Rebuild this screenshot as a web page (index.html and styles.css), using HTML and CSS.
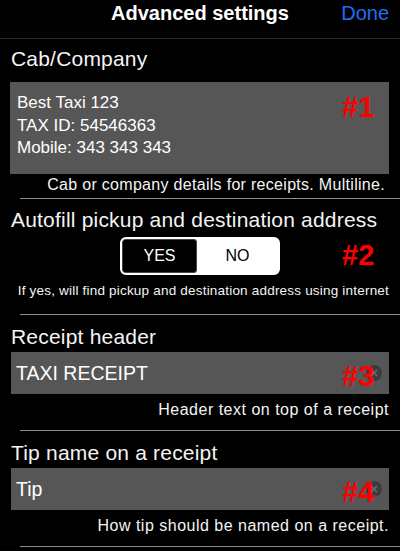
FILE: index.html
```html
<!DOCTYPE html>
<html lang="en">
<head>
    <meta charset="UTF-8">
    <meta name="viewport" content="width=device-width, initial-scale=1.0">
    <title>Advanced settings</title>
    <link rel="stylesheet" href="styles.css">
</head>
<body>
    <header class="navbar">
        <span></span>
        <h1 class="nav-title">Advanced settings</h1>
        <a class="nav-done" href="#">Done</a>
    </header>

    <section class="group group-multi">
        <h2 class="label">Cab/Company</h2>
        <div class="field field-multi">
            <div>Best Taxi 123</div>
            <div>TAX ID: 54546363</div>
            <div>Mobile: 343 343 343</div>
            <span class="badge">#1</span>
        </div>
        <p class="hint">Cab or company details for receipts. Multiline.</p>
    </section>
    <div class="separator"></div>

    <section class="group group-switch">
        <h2 class="label">Autofill pickup and destination address</h2>
        <div class="segment-row">
            <div class="segment">
                <button class="seg seg-on">YES</button>
                <button class="seg">NO</button>
            </div>
            <span class="badge badge-row">#2</span>
        </div>
        <p class="hint hint-small">If yes, will find pickup and destination address using internet</p>
    </section>
    <div class="separator"></div>

    <section class="group">
        <h2 class="label">Receipt header</h2>
        <div class="field">
            <span>TAXI RECEIPT</span>
            <svg class="clear" width="16" height="16" viewBox="0 0 16 16">
                <circle cx="8" cy="8" r="8" fill="#3c3c3c"/>
                <path d="M5 5 L11 11 M11 5 L5 11" stroke="#6c6c6c" stroke-width="1.5"/>
            </svg>
            <span class="badge">#3</span>
        </div>
        <p class="hint">Header text on top of a receipt</p>
    </section>
    <div class="separator"></div>

    <section class="group">
        <h2 class="label">Tip name on a receipt</h2>
        <div class="field">
            <span>Tip</span>
            <svg class="clear" width="16" height="16" viewBox="0 0 16 16">
                <circle cx="8" cy="8" r="8" fill="#3c3c3c"/>
                <path d="M5 5 L11 11 M11 5 L5 11" stroke="#6c6c6c" stroke-width="1.5"/>
            </svg>
            <span class="badge">#4</span>
        </div>
        <p class="hint">How tip should be named on a receipt.</p>
    </section>
    <div class="separator"></div>
</body>
</html>
```

FILE: styles.css
```css
body {
    margin: 0;
    background: #000;
    color: #f4f4f4;
    font-family: "Liberation Sans", Arial, sans-serif;
    overflow: hidden;
}
.navbar {
    display: grid;
    grid-template-columns: 1fr auto 1fr;
    align-items: start;
    height: 39px;
    padding: 1px 11px 0;
    box-sizing: border-box;
    border-bottom: 1px solid #2a2a2a;
}
.nav-title {
    margin: 0;
    font-size: 20px;
    line-height: 24px;
    font-weight: bold;
    color: #fff;
}
.nav-done {
    justify-self: end;
    font-size: 20px;
    line-height: 24px;
    color: #1f6ff4;
    text-decoration: none;
}
.group {
    padding: 10px 11px 0 11px;
}
.label {
    margin: 0;
    font-size: 21px;
    line-height: 24px;
    font-weight: normal;
    letter-spacing: 0.2px;
}
.field {
    position: relative;
    display: flex;
    align-items: center;
    height: 42px;
    margin-top: 3px;
    padding-left: 5px;
    background: #565656;
    font-size: 19.5px;
    color: #fff;
}
.field-multi {
    display: block;
    height: 92px;
    box-sizing: border-box;
    margin: 11px 0 0 -1px;
    padding: 10px 7px;
    font-size: 17px;
    line-height: 22.5px;
}
.hint {
    margin: 7px 0 11px;
    text-align: right;
    font-size: 16px;
    line-height: 18px;
    letter-spacing: 0.5px;
}
.group-multi {
    padding-top: 8px;
}
.group-multi .hint {
    margin: 2px 4px 4px 0;
    letter-spacing: 0.3px;
}
.group-switch {
    padding-top: 9px;
}
.segment-row {
    position: relative;
    display: flex;
    justify-content: center;
    margin-top: 5px;
}
.segment {
    display: flex;
    width: 160px;
    height: 38px;
    box-sizing: border-box;
    border: 2px solid #fff;
    border-radius: 6px;
    background: #fff;
    overflow: hidden;
}
.seg {
    flex: 1;
    border: none;
    background: #fff;
    color: #000;
    font-family: inherit;
    font-size: 16px;
    padding: 0;
}
.seg-on {
    flex: 0 0 75px;
    background: #000;
    color: #fff;
    border: 1px solid #444;
    border-radius: 3px;
}
.hint-small {
    margin: 8px 0 15px;
    font-size: 13.5px;
    line-height: 16px;
    letter-spacing: 0.2px;
}
.clear {
    position: absolute;
    right: 7px;
    top: 13px;
}
.badge {
    position: absolute;
    left: 331px;
    top: 10px;
    font-size: 29px;
    line-height: 1;
    font-weight: bold;
    color: #ff0000;
}
.field-multi .badge {
    left: 332px;
    top: 11px;
}
.badge-row {
    left: 331px;
    top: 4px;
}
.separator {
    margin-left: 20px;
    border-top: 1px solid #8e8e8e;
}
```
